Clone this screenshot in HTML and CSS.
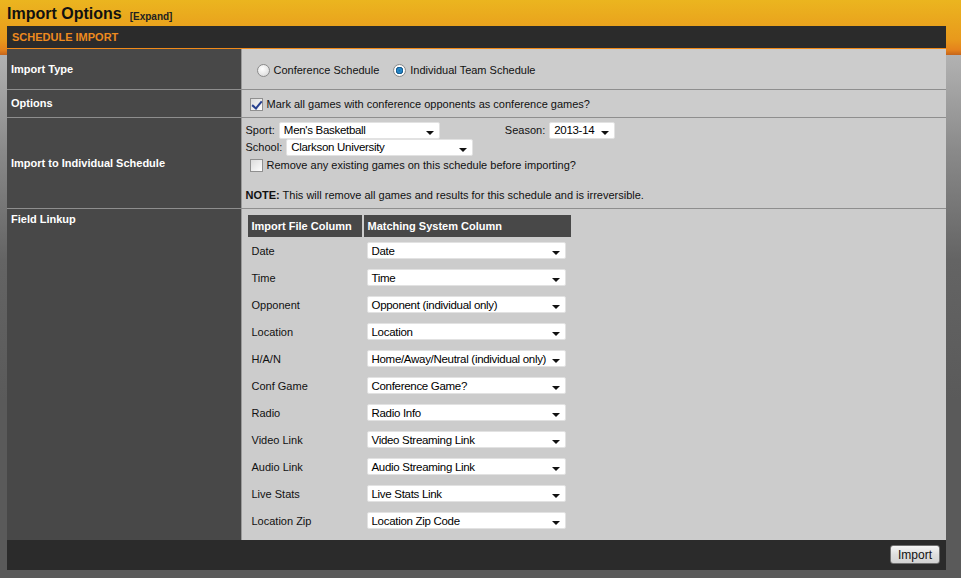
FILE: index.html
```html
<!DOCTYPE html>
<html lang="en">
<head>
  <meta charset="UTF-8">
  <title>Import Options</title>
  <link rel="stylesheet" href="styles.css">
</head>
<body>
  <div class="page">
    <div class="title">
      <h1>Import Options</h1>
      <a class="expand">[Expand]</a>
    </div>

    <div class="panel">
      <div class="panel-head">SCHEDULE IMPORT</div>

      <table class="form">
        <tr class="row-type">
          <td class="label">Import Type</td>
          <td class="value">
            <div class="radios">
              <label class="opt"><span class="radio"></span>Conference Schedule</label>
              <label class="opt"><span class="radio on"></span>Individual Team Schedule</label>
            </div>
          </td>
        </tr>
        <tr class="row-options">
          <td class="label">Options</td>
          <td class="value">
            <label class="opt"><span class="check on"></span>Mark all games with conference opponents as conference games?</label>
          </td>
        </tr>
        <tr class="row-individual">
          <td class="label">Import to Individual Schedule</td>
          <td class="value">
            <div class="line">
              <span class="lbl">Sport:</span>
              <div class="select sport"><span>Men's Basketball</span><i class="arrow"></i></div>
              <span class="lbl season-lbl">Season:</span>
              <div class="select season"><span>2013-14</span><i class="arrow"></i></div>
            </div>
            <div class="line">
              <span class="lbl">School:</span>
              <div class="select school"><span>Clarkson University</span><i class="arrow"></i></div>
            </div>
            <label class="opt remove"><span class="check"></span>Remove any existing games on this schedule before importing?</label>
            <p class="note"><b>NOTE:</b> This will remove all games and results for this schedule and is irreversible.</p>
          </td>
        </tr>
        <tr class="row-linkup">
          <td class="label">Field Linkup</td>
          <td class="value">
            <table class="linkup">
              <tr>
                <th class="first">Import File Column</th>
                <th>Matching System Column</th>
              </tr>
              <tr><td>Date</td><td><div class="select map"><span>Date</span><i class="arrow"></i></div></td></tr>
              <tr><td>Time</td><td><div class="select map"><span>Time</span><i class="arrow"></i></div></td></tr>
              <tr><td>Opponent</td><td><div class="select map"><span>Opponent (individual only)</span><i class="arrow"></i></div></td></tr>
              <tr><td>Location</td><td><div class="select map"><span>Location</span><i class="arrow"></i></div></td></tr>
              <tr><td>H/A/N</td><td><div class="select map"><span>Home/Away/Neutral (individual only)</span><i class="arrow"></i></div></td></tr>
              <tr><td>Conf Game</td><td><div class="select map"><span>Conference Game?</span><i class="arrow"></i></div></td></tr>
              <tr><td>Radio</td><td><div class="select map"><span>Radio Info</span><i class="arrow"></i></div></td></tr>
              <tr><td>Video Link</td><td><div class="select map"><span>Video Streaming Link</span><i class="arrow"></i></div></td></tr>
              <tr><td>Audio Link</td><td><div class="select map"><span>Audio Streaming Link</span><i class="arrow"></i></div></td></tr>
              <tr><td>Live Stats</td><td><div class="select map"><span>Live Stats Link</span><i class="arrow"></i></div></td></tr>
              <tr><td>Location Zip</td><td><div class="select map"><span>Location Zip Code</span><i class="arrow"></i></div></td></tr>
            </table>
          </td>
        </tr>
      </table>

      <div class="panel-foot">
        <button class="btn">Import</button>
      </div>
    </div>
  </div>
</body>
</html>
```

FILE: styles.css
```css
* {
  box-sizing: border-box;
}
body {
  margin: 0;
  min-height: 578px;
  font-family: Tahoma, 'Liberation Sans', Arial, sans-serif;
  font-size: 11px;
  color: #111;
  background: linear-gradient(to bottom, #ebb51f 0, #e8991c 40px, #e5821c 50px, #c4641a 55px, #b2b2b2 55px, #8a8a8a 150px, #646464 260px, #5a5a5a 400px, #5a5a5a 100%);
}
.page {
  width: 939px;
  margin-left: 7px;
}
.title {
  height: 26px;
  display: flex;
  align-items: flex-end;
  padding-bottom: 2px;
}
h1 {
  margin: 0;
  font-size: 16px;
  font-weight: bold;
  color: #111;
  line-height: 20px;
}
.expand {
  font-size: 10px;
  font-weight: bold;
  color: #222;
  margin-left: 8px;
  margin-bottom: 2px;
}
.panel-head {
  background: #2b2b2b;
  color: #ee8a1e;
  font-weight: bold;
  font-size: 11px;
  height: 23px;
  line-height: 22px;
  padding-left: 5px;
  border-bottom: 1px solid #f08a1a;
}
.form {
  width: 100%;
  border-collapse: collapse;
}
.form > tbody > tr > td {
  border-bottom: 1px solid #8e8e8e;
  padding: 0;
}
.label {
  width: 234px;
  background: #484848;
  color: #fff;
  font-weight: bold;
  font-size: 11px;
  padding-left: 4px !important;
}
.value {
  background: #cccccc;
  border-left: 1px solid #9a9a9a;
}
.row-type td {
  height: 40px;
}
.row-options td {
  height: 28px;
}
.row-individual td {
  height: 91px;
}
.row-linkup > td {
  border-bottom: none !important;
  vertical-align: top;
}
.row-linkup .label {
  padding-top: 4px !important;
}

.radios {
  display: flex;
  gap: 14px;
  padding-left: 15px;
  padding-top: 3px;
}
.opt {
  display: flex;
  align-items: center;
  gap: 4px;
  color: #111;
}
.radio {
  width: 13px;
  height: 13px;
  border-radius: 50%;
  border: 1px solid #8a8a8a;
  background: radial-gradient(circle at 40% 35%, #fff 0, #e6e6e6 60%, #cfcfcf 100%);
  display: inline-block;
}
.radio.on {
  background: radial-gradient(circle, #1c6fa8 0, #2b8ed0 2px, #0f4f80 3.5px, #fff 4px, #e6e6e6 100%);
}
.check {
  width: 13px;
  height: 13px;
  border: 1px solid #8f8f8f;
  background: linear-gradient(135deg, #dcdcdc, #fdfdfd);
  position: relative;
  display: inline-block;
}
.check.on::after {
  content: "";
  position: absolute;
  left: 3px;
  top: 0;
  width: 4px;
  height: 8px;
  border: solid #27408f;
  border-width: 0 2px 2px 0;
  transform: rotate(40deg);
}
.row-options .opt {
  padding-left: 8px;
  padding-top: 2px;
}

.row-individual .value {
  padding: 4px 0 0 4px;
  vertical-align: top;
}
.line {
  display: flex;
  align-items: center;
  height: 17px;
}
.lbl {
  margin-right: 4px;
}
.season-lbl {
  margin-left: 65px;
}
.select {
  height: 17px;
  background: #fff;
  border: 1px solid #e2e2e2;
  border-radius: 2px;
  display: flex;
  align-items: center;
  justify-content: space-between;
  padding: 0 5px 0 4px;
  font-size: 11.5px;
  letter-spacing: -0.3px;
  white-space: nowrap;
  color: #000;
}
.arrow {
  flex: none;
  width: 0;
  height: 0;
  border-left: 4px solid transparent;
  border-right: 4px solid transparent;
  border-top: 4px solid #111;
  margin-top: 5px;
}
.sport {
  width: 161px;
}
.season {
  width: 66px;
}
.school {
  width: 187px;
}
.remove {
  padding-left: 4px;
  margin-top: 3px;
}
.note {
  margin: 17px 0 0;
  font-size: 11px;
}

.linkup {
  border-collapse: collapse;
  margin: 6px 0 6px 6px;
}
.linkup th {
  background: #484848;
  color: #fff;
  font-weight: bold;
  font-size: 11px;
  text-align: left;
  height: 22px;
  padding: 0 4px;
  width: 208px;
}
.linkup th.first {
  width: 115px;
  border-right: 2px solid #ccc;
}
.linkup td {
  height: 27px;
  padding: 1px 4px 0;
  vertical-align: middle;
}
.map {
  width: 199px;
}

.panel-foot {
  background: #2b2b2b;
  height: 30px;
  display: flex;
  align-items: center;
  justify-content: flex-end;
  padding-right: 6px;
}
.btn {
  width: 50px;
  height: 19px;
  font-family: Tahoma, 'Liberation Sans', Arial, sans-serif;
  font-size: 12px;
  color: #111;
  background: linear-gradient(to bottom, #f6f6f6, #dedede 50%, #d2d2d2);
  border: 1px solid #707070;
  border-radius: 3px;
  padding: 0;
}
```
